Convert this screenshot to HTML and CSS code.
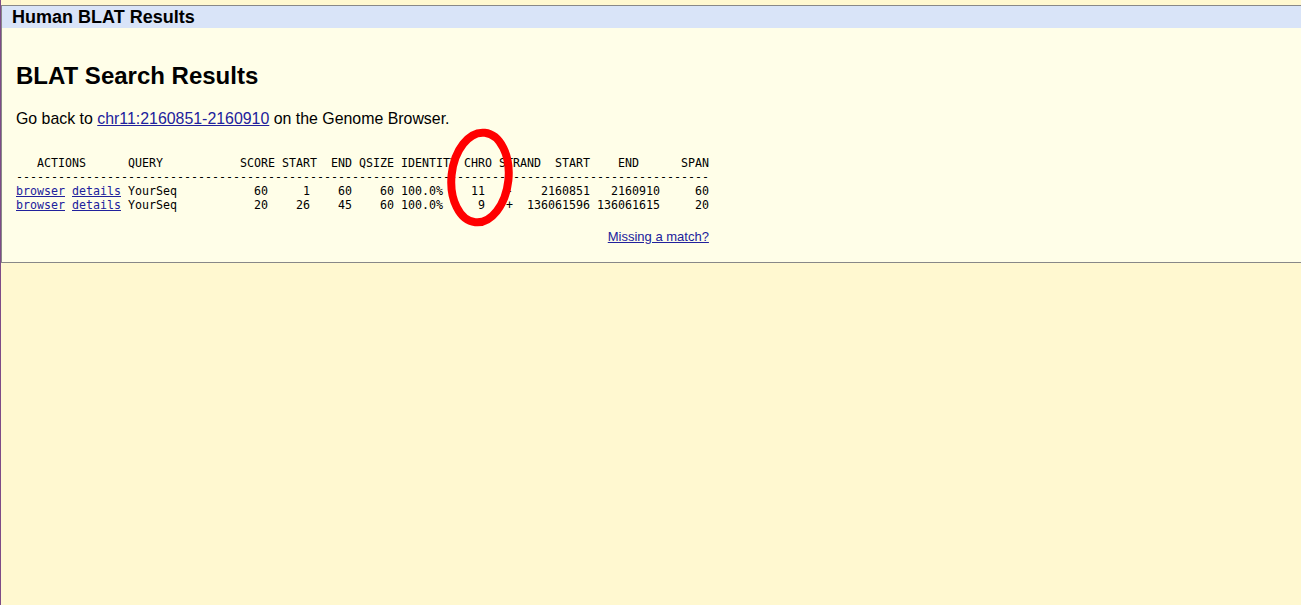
FILE: index.html
```html
<!DOCTYPE html>
<html lang="en">
<head>
<meta charset="utf-8">
<title>Human BLAT Results</title>
<link rel="stylesheet" href="styles.css">
</head>
<body>
<div class="page">
  <div class="titlebar">Human BLAT Results</div>
  <div class="content">
    <h2 class="heading">BLAT Search Results</h2>
    <p class="goback">Go back to <a href="#">chr11:2160851-2160910</a> on the Genome Browser.</p>
    <div class="results">
<pre class="hits">   ACTIONS      QUERY           SCORE START  END QSIZE IDENTITY CHRO STRAND  START    END      SPAN
---------------------------------------------------------------------------------------------------
<a href="#">browser</a> <a href="#">details</a> YourSeq           60     1    60    60 100.0%    11   -    2160851   2160910     60
<a href="#">browser</a> <a href="#">details</a> YourSeq           20    26    45    60 100.0%     9   +  136061596 136061615     20</pre>
      <div class="missing"><a href="#">Missing a match?</a></div>
      <svg class="circle" width="80" height="110" viewBox="0 0 80 110" aria-hidden="true">
        <ellipse cx="40" cy="54.5" rx="28.5" ry="45" fill="none" stroke="#ff0000" stroke-width="8" transform="rotate(6 40 54.5)"/>
      </svg>
    </div>
  </div>
</div>
</body>
</html>
```
FILE: styles.css
```css
html {
  background: #fff8d0;
}
body {
  margin: 0;
  padding-top: 5px;
  min-height: 100vh;
  box-sizing: border-box;
  border-left: 1px solid #7d4b87;
  background: #fff8d0;
  font-family: "Liberation Sans", Arial, sans-serif;
  color: #000;
}
.page {
  background: #fffee8;
  border-top: 1px solid #888888;
  border-bottom: 1px solid #888888;
  border-left: 1px solid #888888;
}
.titlebar {
  background: #d9e4f8;
  height: 21px;
  padding: 1px 0 0 10px;
  font-size: 18px;
  font-weight: bold;
  line-height: 21px;
}
.content {
  padding: 0 0 18px 14px;
}
.heading {
  margin: 34px 0 0;
  font-size: 24px;
  line-height: 27px;
  font-weight: bold;
}
.goback {
  margin: 21px 0 0;
  font-size: 15.9px;
  line-height: 18px;
}
a {
  color: #21219c;
}
.results {
  position: relative;
  width: max-content;
  margin-top: 28px;
}
.hits {
  margin: 0;
  font-family: "DejaVu Sans Mono", monospace;
  font-size: 11.63px;
  line-height: 14px;
}
.missing {
  margin-top: 17px;
  text-align: right;
  font-size: 13px;
  line-height: 15px;
}
.circle {
  position: absolute;
  left: 424px;
  top: -33px;
}
```
